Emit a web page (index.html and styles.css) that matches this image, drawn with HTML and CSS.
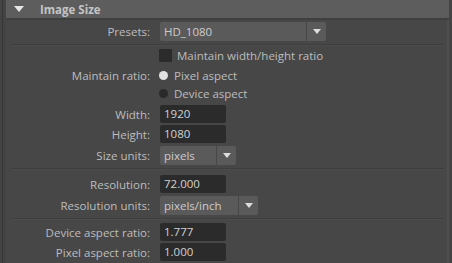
FILE: index.html
```html
<!DOCTYPE html>
<html lang="en">
<head>
  <meta charset="UTF-8" />
  <title>Image Size</title>
  <link rel="stylesheet" href="styles.css">
</head>
<body>
  <div class="frame">
    <div class="section">
      <div class="header">
        <span class="arrow"></span>
        <span class="title">Image Size</span>
      </div>

      <div class="content">
        <div class="row r-presets">
          <label>Presets:</label>
          <div class="combo w-presets"><span class="value">HD_1080</span></div>
          <div class="drop"><span class="tri"></span></div>
        </div>

        <div class="sep"></div>

        <div class="row r-opt">
          <label></label>
          <span class="check"></span>
          <span class="opt">Maintain width/height ratio</span>
        </div>
        <div class="row r-opt">
          <label>Maintain ratio:</label>
          <span class="radio on"></span>
          <span class="opt">Pixel aspect</span>
        </div>
        <div class="row r-opt">
          <label></label>
          <span class="radio"></span>
          <span class="opt">Device aspect</span>
        </div>

        <div class="row r-field first">
          <label>Width:</label>
          <div class="field">1920</div>
        </div>
        <div class="row r-field">
          <label>Height:</label>
          <div class="field">1080</div>
        </div>
        <div class="row r-combo">
          <label>Size units:</label>
          <div class="combo w-size"><span class="value">pixels</span></div>
          <div class="drop"><span class="tri"></span></div>
        </div>

        <div class="sep wide"></div>

        <div class="row r-field">
          <label>Resolution:</label>
          <div class="field">72.000</div>
        </div>
        <div class="row r-combo">
          <label>Resolution units:</label>
          <div class="combo w-res"><span class="value">pixels/inch</span></div>
          <div class="drop"><span class="tri"></span></div>
        </div>

        <div class="sep"></div>

        <div class="row r-field">
          <label>Device aspect ratio:</label>
          <div class="field">1.777</div>
        </div>
        <div class="row r-field">
          <label>Pixel aspect ratio:</label>
          <div class="field">1.000</div>
        </div>
      </div>
    </div>
  </div>
</body>
</html>
```

FILE: styles.css
```css
html, body {
  margin: 0;
  padding: 0;
  background-color: #444444;
}
body {
  font-family: "Open Sans", "Noto Sans", sans-serif;
  font-size: 11.5px;
  color: #bdbdbd;
  overflow: hidden;
}
.frame {
  height: 263px;
  border-left: 1px solid #363636;
  margin-left: 2px;
  padding-left: 3px;
}
.section {
  width: 443px;
}
.header {
  height: 18px;
  background-color: #5d5d5d;
  border-radius: 0 0 2px 2px;
  display: flex;
  align-items: center;
  border-bottom: 2px solid #3f3f3f;
}
.arrow {
  width: 0;
  height: 0;
  margin-left: 8px;
  border-left: 5px solid transparent;
  border-right: 5px solid transparent;
  border-top: 6px solid #e6e6e6;
}
.title {
  margin-left: 16px;
  font-weight: bold;
  color: #c4c4c4;
}
.content {
  background-color: #474747;
  border-right: 2px solid #4f4f4f;
  padding-top: 1px;
  height: 243px;
}
.row {
  display: flex;
  align-items: center;
}
.row label {
  width: 144px;
  text-align: right;
  padding-right: 10px;
  flex: none;
}
.r-presets { height: 21px; }
.r-opt { height: 18px; }
.r-field { height: 20px; }
.r-field.first { margin-top: 2px; }
.r-combo { height: 22px; }
.field {
  width: 62px;
  height: 18px;
  line-height: 18px;
  padding-left: 4px;
  background-color: #2b2b2b;
  border-radius: 2px;
  color: #d2d2d2;
}
.combo {
  height: 19px;
  line-height: 19px;
  padding-left: 4px;
  background-color: #5a5a5a;
  border-radius: 2px 0 0 2px;
  color: #cccccc;
  box-sizing: border-box;
}
.w-presets { width: 146px; }
.w-size { width: 56px; }
.w-res { width: 78px; }
.drop {
  width: 19px;
  height: 19px;
  margin-left: 1px;
  background-color: #5a5a5a;
  border-radius: 0 2px 2px 0;
  display: flex;
  align-items: center;
  justify-content: center;
}
.tri {
  width: 0;
  height: 0;
  border-left: 4px solid transparent;
  border-right: 4px solid transparent;
  border-top: 5px solid #dddddd;
}
.check {
  width: 13px;
  height: 13px;
  margin-left: -1px;
  margin-bottom: 3px;
  background-color: #2b2b2b;
  border-radius: 1px;
}
.radio {
  width: 9px;
  height: 9px;
  margin-left: -1px;
  margin-right: 4px;
  border-radius: 50%;
  background-color: #2a2a2a;
}
.radio.on {
  background-color: #e2e2e2;
}
.opt {
  margin-left: 5px;
  color: #bdbdbd;
}
.check + .opt {
  margin-bottom: 3px;
}
.radio + .opt {
  margin-left: 2px;
}
.sep {
  height: 1px;
  margin: 2px 3px 2px 5px;
  background-color: #3e3e3e;
  border-bottom: 1px solid #4c4c4c;
}
.sep.wide {
  margin-bottom: 4px;
}
```
